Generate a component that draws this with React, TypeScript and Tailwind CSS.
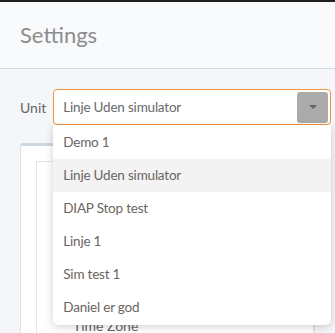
import React from "react";

const items = ["Demo 1", "Linje Uden simulator", "DIAP Stop test", "Linje 1", "Sim test 1", "Daniel er god"];

export default function App() {
  return (
    <div className="w-[335px] h-[333px] overflow-hidden bg-[#f4f6f9] relative" style={{ fontFamily: "Lato, 'Noto Sans', sans-serif" }}>
      <div className="h-[2px] bg-[#1e1e1e]" />
      <div className="h-[67px] bg-[#f9fafc] border-b border-[#d3dbe2] flex items-center pl-[20px]">
        <h1 className="text-[22px] text-[#8c8c8c] leading-none">Settings</h1>
      </div>
      <div className="pl-[20px] pt-[20px] pr-[4px] flex items-center gap-[7px]">
        <span className="text-[14px] text-[#666]">Unit</span>
        <div className="relative flex-1">
          <div className="h-[36px] border border-[#f0953f] rounded-[4px] bg-white flex items-center pl-[9px] pr-[2px]">
            <span className="flex-1 text-[13.5px] text-[#6a6a6a] tracking-[-0.2px]">Linje Uden simulator</span>
            <div className="w-[31px] h-[31px] bg-[#ababab] rounded-[3px] flex items-center justify-center">
              <div className="w-0 h-0 border-l-[4px] border-r-[4px] border-t-[4px] border-l-transparent border-r-transparent border-t-[#666]" />
            </div>
          </div>
          <div className="absolute left-0 right-0 top-[36px] bg-white rounded-b-[5px] shadow-[0_2px_8px_rgba(0,0,0,0.18)] pt-[1px] pb-[1px] z-10">
            {items.map((it, i) => (
              <div key={it} className={"h-[33px] flex items-center pl-[10px] text-[13.5px] tracking-[-0.2px] text-[#6b6560] " + (i === 1 ? "bg-[#f3f3f3]" : "")}>
                {it}
              </div>
            ))}
          </div>
        </div>
      </div>
      <div className="mx-[20px] mt-[18px] border border-[#dde3e8] border-t-[3px] border-t-[#cfd8df] rounded-t-[3px] bg-white h-[200px] pl-[15px] pt-[15px]">
        <div className="border border-[#e3e6e9] h-[200px] pl-[36px] pt-[151px]">
          <span className="text-[14px] text-[#666]">Time Zone</span>
        </div>
      </div>
    </div>
  );
}
